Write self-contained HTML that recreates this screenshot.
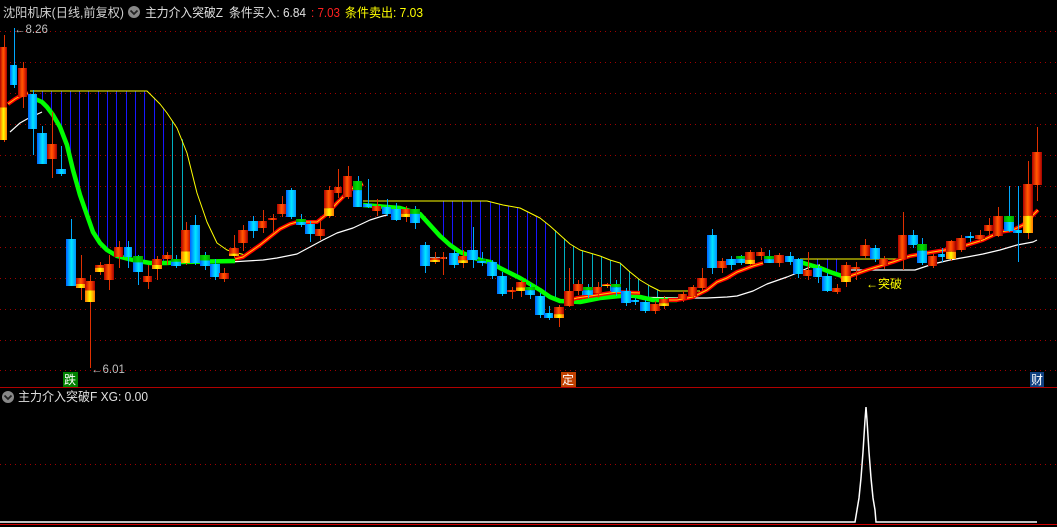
<!DOCTYPE html>
<html><head><meta charset="utf-8">
<style>
html,body{margin:0;padding:0;background:#000;width:1057px;height:527px;overflow:hidden}
svg{display:block}
text{font-family:"Liberation Sans","Noto Sans CJK SC",sans-serif}
</style></head>
<body>
<svg id="s" width="1057" height="527" viewBox="0 0 1057 527" xmlns="http://www.w3.org/2000/svg">
<defs>
<linearGradient id="gr" x1="0" x2="1" y1="0" y2="0"><stop offset="0" stop-color="#b00000"/><stop offset=".45" stop-color="#ff5a00"/><stop offset=".6" stop-color="#ff4000"/><stop offset="1" stop-color="#a00000"/></linearGradient>
<linearGradient id="gy" x1="0" x2="1" y1="0" y2="0"><stop offset="0" stop-color="#ff7000"/><stop offset=".5" stop-color="#ffff00"/><stop offset="1" stop-color="#ff7000"/></linearGradient>
<linearGradient id="gb" x1="0" x2="1" y1="0" y2="0"><stop offset="0" stop-color="#0060ff"/><stop offset=".55" stop-color="#00e8ff"/><stop offset="1" stop-color="#0090ff"/></linearGradient>
<linearGradient id="gg" x1="0" x2="1" y1="0" y2="0"><stop offset="0" stop-color="#00a000"/><stop offset=".5" stop-color="#00e000"/><stop offset="1" stop-color="#00a000"/></linearGradient>
</defs>
<g id="grid" stroke="#a00000" stroke-width="1" stroke-dasharray="1,4"></g>
<line x1="0" y1="387.5" x2="1057" y2="387.5" stroke="#b00000"/>
<line x1="0" y1="464.5" x2="1057" y2="464.5" stroke="#a00000" stroke-dasharray="1,4"/>
<line x1="0" y1="524.5" x2="1057" y2="524.5" stroke="#d00000"/>
<g id="fill"></g>
<g id="lines"></g>
<g id="candles"></g>
<polyline points="0,522 855,522 857,510 859,498 861,478 863,452 865,420 866,407 867,420 869,452 871,478 873,498 875,510 876,522 1037,522" fill="none" stroke="#fff" stroke-width="1.5"/>
<text x="3" y="17" font-size="12.5" fill="#d0d0d0" textLength="121" lengthAdjust="spacingAndGlyphs">沈阳机床(日线,前复权)</text>
<circle cx="134" cy="12" r="6" fill="#888"/><path d="M130.5 10.5 L134 14 L137.5 10.5" stroke="#222" stroke-width="1.8" fill="none"/>
<text x="145" y="17" font-size="12.5" fill="#e0e0e0" textLength="78" lengthAdjust="spacingAndGlyphs">主力介入突破Z</text>
<text x="229" y="17" font-size="12.5" fill="#e0e0e0" textLength="77" lengthAdjust="spacingAndGlyphs">条件买入: 6.84</text>
<text x="311" y="17" font-size="12.5" fill="#ff2020" textLength="29" lengthAdjust="spacingAndGlyphs">: 7.03</text>
<text x="345" y="17" font-size="12.5" fill="#ffff00" textLength="78" lengthAdjust="spacingAndGlyphs">条件卖出: 7.03</text>
<text x="14" y="33" font-size="11.5" fill="#c0c0c0">←8.26</text>
<text x="91" y="373" font-size="11.5" fill="#c0c0c0">←6.01</text>
<rect x="63" y="372" width="15" height="15" fill="#008000"/><text x="64" y="384" font-size="12" fill="#fff">跌</text>
<rect x="561" y="372" width="15" height="15" fill="#c04000"/><text x="562" y="384" font-size="12" fill="#fff">定</text>
<rect x="1030" y="372" width="14" height="15" fill="#104080"/><text x="1031" y="384" font-size="12" fill="#fff">财</text>
<text x="866" y="288" font-size="12" fill="#ffff00">←突破</text>
<circle cx="8" cy="397" r="6" fill="#888"/><path d="M4.5 395.5 L8 399 L11.5 395.5" stroke="#222" stroke-width="1.8" fill="none"/>
<text x="18" y="401" font-size="12.5" fill="#e0e0e0" textLength="130" lengthAdjust="spacingAndGlyphs">主力介入突破F XG: 0.00</text>
</svg>
<script>
var NS="http://www.w3.org/2000/svg";
function el(p,t,a){var e=document.createElementNS(NS,t);for(var k in a)e.setAttribute(k,a[k]);document.getElementById(p).appendChild(e);return e;}
[31,62,93,124,155,186,216,247,278,309,340,370].forEach(function(y){el("grid","line",{x1:0,x2:1057,y1:y+.5,y2:y+.5});});
var Y=[[30,91],[147,91],[150,94],[160,104],[167,113],[177,128],[187,153],[197,193],[207,222],[217,243],[227,250],[245,255]];
var G=[[33,98],[42,102],[47,107],[53,115],[60,127],[67,145],[73,170],[80,195],[87,215],[93,232],[100,243],[107,250],[117,256],[133,260],[150,263],[167,263],[180,262],[235,261]];
var Y2=[[363,201],[487,201],[503,205],[520,208],[530,213],[540,218],[550,226],[560,235],[570,244],[580,250],[590,253],[600,256],[610,260],[620,263],[630,272],[640,280],[650,286],[660,291],[700,291]];
var G2=[[363,205],[400,208],[420,214],[430,225],[440,236],[450,245],[460,252],[470,256],[480,260],[490,262],[500,268],[510,273],[520,278],[530,284],[540,290],[550,297],[560,301],[580,302],[600,298],[630,295],[640,297],[653,300],[677,300]];
var Y3=[[800,259],[900,259]];
var G3=[[800,262],[810,265],[820,268],[830,272],[842,276]];
function interp(P,x){for(var i=0;i<P.length-1;i++){if(x>=P[i][0]&&x<=P[i+1][0]){var t=(x-P[i][0])/(P[i+1][0]-P[i][0]);return P[i][1]+t*(P[i+1][1]-P[i][1]);}}return null;}
for(var x=42;x<=190;x+=9.3){var a=interp(Y,x),b=interp(G,x);if(a!=null&&b!=null&&b>a)el("fill","line",{x1:Math.round(x)+.5,x2:Math.round(x)+.5,y1:a,y2:b,stroke:x>170?"#00b0c0":"#1818ff","stroke-width":1});}
for(var x=443;x<=665;x+=9.3){var a=interp(Y2,x),b=interp(G2,x);if(a!=null&&b!=null&&b>a)el("fill","line",{x1:Math.round(x)+.5,x2:Math.round(x)+.5,y1:a,y2:b,stroke:x>548?"#00b0c0":"#1818ff","stroke-width":1});}
for(var x=808;x<=840;x+=9.3){var a=interp(Y3,x),b=interp(G3,x);if(a!=null&&b!=null&&b>a)el("fill","line",{x1:Math.round(x)+.5,x2:Math.round(x)+.5,y1:a,y2:b,stroke:"#1818ff","stroke-width":1});}
function pl(P,c,w){el("lines","polyline",{points:P.map(function(p){return p.join(",")}).join(" "),fill:"none",stroke:c,"stroke-width":w,"stroke-linejoin":"round"});}
pl(Y,"#ffff00",1);pl(Y2,"#ffff00",1);pl(Y3,"#ffff00",1);
pl([[10,132],[20,123],[27,119],[42,112]],"#fff",1.2);
pl([[230,262],[263,260],[277,258],[297,254],[310,247],[323,240],[337,233],[353,228],[370,220],[383,216],[387,215]],"#fff",1.2);
pl([[430,258],[447,258]],"#fff",1.2);
pl([[603,296],[620,297],[687,298],[707,298],[727,297],[737,296],[753,291],[767,284],[787,277],[797,273],[810,267],[820,265]],"#fff",1.2);
pl([[843,270],[915,270],[933,264],[950,260],[967,257],[983,254],[1000,250],[1017,245],[1033,242],[1037,240]],"#fff",1.2);
pl(G,"#00ff00",4.5);pl(G2,"#00ff00",4.5);pl(G3,"#00ff00",4.5);
var R1=[[8,104],[15,99],[22,95],[28,93]];
var R2=[[235,259],[243,257],[250,252],[260,245],[270,237],[280,229],[290,224],[297,222],[317,222],[327,214],[337,203],[347,193],[353,188],[363,184]];
var R3=[[570,300],[577,298],[617,292],[640,293]];
var R4=[[668,300],[677,300],[693,297],[707,290],[717,282],[727,278],[737,272],[753,266],[763,263]];
var R5=[[845,278],[853,275],[867,270],[883,265],[893,262],[910,256],[933,252],[957,248],[967,245],[983,240],[1000,232],[1013,230],[1023,225],[1033,215],[1038,210]];
[R1,R2,R3,R4,R5].forEach(function(R){pl(R,"#ff0000",4);pl(R,"#ffd000",1);});
var C=[
[0,8,47,140,'ry',35,142,.35],[10,18,65,85,'b',28,88],[18,28,68,97,'r',62,108],[28,38,94,129,'gb',90,155],[37,48,133,164,'b',126,164],
[47,58,144,159,'r',112,178],[56,67,169,174,'b',146,176],[66,77,239,286,'b',219,286],[76,87,278,288,'ry',255,300,.4],[85,96,281,302,'ry',275,368,.55],
[95,106,265,272,'ry',262,275,.6],[104,115,264,280,'r',255,290],[114,124,247,257,'r',241,268],[124,133,247,257,'b',241,268],[133,144,256,272,'gb',255,285,.4],
[143,153,276,282,'r',265,289],[152,163,259,269,'ry',256,280,.4],[162,173,255,259,'r',252,265],[171,182,259,266,'gb',255,268,.4],[181,192,230,263,'ry',222,265,.35],
[190,201,225,263,'b',215,265],[200,211,255,266,'gb',252,270,.5],[210,221,264,277,'b',259,280],[219,230,273,279,'r',268,282],[229,240,248,256,'ry',235,258,.3],
[238,249,230,243,'r',225,251],[248,259,221,231,'b',216,238],[258,268,221,228,'r',210,233],[268,278,218,220,'r',214,233],[277,288,204,214,'r',196,217],
[286,297,190,217,'b',188,219],[296,307,219,225,'gb',214,227,.5],[305,316,224,234,'b',221,242],[315,326,229,236,'r',220,240],[324,335,190,216,'ry',186,218,.3],
[334,343,187,193,'r',169,198],[343,353,176,197,'r',166,199],[353,363,181,207,'gb',176,207,.35],[363,373,204,207,'b',179,208],[372,382,206,211,'r',199,216],
[382,392,207,214,'b',199,216],[391,402,209,220,'b',203,221],[401,412,209,217,'ry',206,222,.4],[410,421,209,223,'gb',206,229,.35],[420,431,245,266,'b',242,273],
[430,441,258,262,'ry',252,264,.5],[440,447,257,259,'r',252,275],[449,460,253,265,'b',250,268],[458,469,256,263,'ry',250,268,.4],[467,479,250,260,'b',227,268],
[477,487,259,263,'gb',252,266,.5],[487,498,262,276,'b',260,279],[497,508,276,294,'b',272,296],[507,517,290,292,'r',287,299],[516,527,282,291,'ry',280,297,.4],
[525,536,287,295,'gb',284,299,.4],[535,546,296,315,'b',293,318],[544,554,313,318,'b',306,320],[554,565,307,318,'ry',305,327,.35],[564,575,291,306,'r',268,307],
[573,584,284,291,'r',280,295],[583,594,287,295,'gb',284,298,.4],[593,603,287,293,'r',282,298],[602,612,284,286,'ry',283,288,.5],[611,622,284,292,'gb',280,296,.4],
[621,632,291,303,'b',288,306],[631,640,300,302,'b',298,305],[640,651,302,311,'b',300,313],[650,661,304,311,'r',301,314],[659,670,299,306,'ry',296,309,.4],
[678,688,294,299,'r',291,302],[688,698,287,296,'r',285,298],[697,708,278,288,'r',268,290],[707,718,235,268,'b',229,274],[717,728,261,268,'r',258,273],
[726,737,259,265,'b',256,270],[736,747,256,263,'gb',255,265,.4],[745,756,252,264,'ry',250,266,.35],[756,766,252,256,'r',248,260],[764,775,256,263,'gb',250,263,.45],
[774,785,255,263,'r',253,267],[785,795,256,262,'b',252,265],[793,804,259,274,'b',258,278],[803,813,270,276,'r',252,280],[813,823,268,277,'b',266,283],
[822,833,276,291,'b',273,292],[832,842,288,292,'r',284,294],[841,852,265,282,'ry',262,287,.35],[851,861,267,269,'r',262,280],[860,871,245,256,'r',239,258],
[870,881,248,259,'b',245,262],[879,889,259,265,'r',256,269],[898,908,235,259,'r',212,270],[908,919,235,245,'b',230,248],[917,928,244,263,'gb',238,265,.35],
[928,938,256,266,'r',254,268],[938,946,254,257,'b',248,262],[946,957,241,259,'ry',240,261,.4],[956,967,238,250,'r',235,252],[965,975,236,238,'b',232,242],
[975,986,235,239,'r',230,242],[984,994,225,231,'r',218,235],[993,1004,216,236,'r',207,237],[1004,1015,216,231,'gb',186,232,.4],[1013,1023,230,233,'b',186,262],
[1023,1034,184,233,'ry',161,239,.35],[1032,1043,152,185,'r',127,201]
];
C.forEach(function(c){
 var x0=c[0],x1=c[1]-1,t=c[2],b=c[3],ty=c[4],hi=c[5],lo=c[6],f=c[7]||0;
 var cx=Math.round((x0+x1)/2)+.5;
 var wc=(ty=='b'||ty=='gb')?"#00a8ff":"#e03000";
 el("candles","line",{x1:cx,x2:cx,y1:hi,y2:lo,stroke:wc,"stroke-width":1});
 var w=x1-x0, h=Math.max(b-t,2);
 if(ty=='r')el("candles","rect",{x:x0,y:t,width:w,height:h,fill:"url(#gr)"});
 else if(ty=='b')el("candles","rect",{x:x0,y:t,width:w,height:h,fill:"url(#gb)"});
 else if(ty=='ry'){var yh=h*f;el("candles","rect",{x:x0,y:t,width:w,height:h-yh,fill:"url(#gr)"});el("candles","rect",{x:x0,y:b-yh,width:w,height:yh,fill:"url(#gy)"});}
 else if(ty=='gb'){var gh=h*f;el("candles","rect",{x:x0,y:t,width:w,height:gh,fill:"url(#gg)"});el("candles","rect",{x:x0,y:t+gh,width:w,height:h-gh,fill:"url(#gb)"});}
});
</script>
</body></html>
